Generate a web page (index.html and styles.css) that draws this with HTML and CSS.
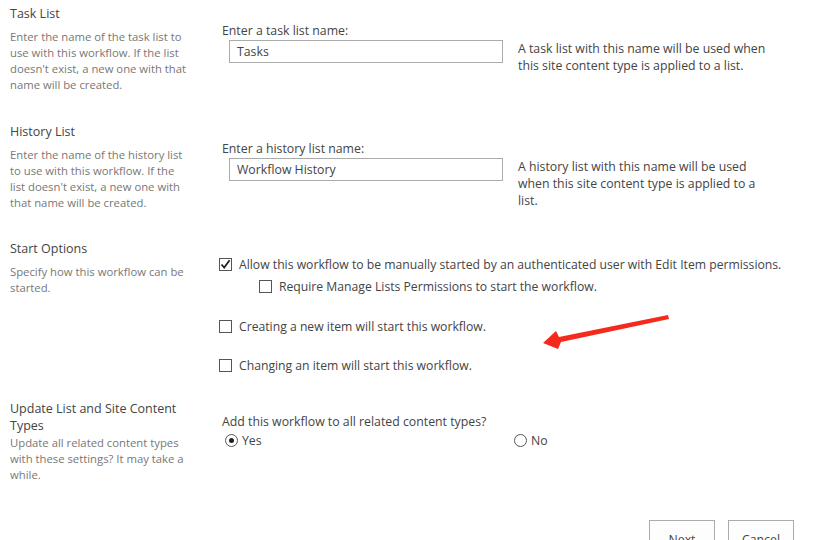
FILE: index.html
```html
<!DOCTYPE html>
<html>
<head>
<meta charset="UTF-8" />
<title>Workflow settings</title>
<link rel="stylesheet" href="styles.css">
</head>
<body>
<div class="page">
	<div class="section sec-task">
		<div class="leftCol">
			<h3>Task List</h3>
			<p class="desc">Enter the name of the task list to use with this workflow. If the list doesn't exist, a new one with that name will be created.</p>
		</div>
		<div class="rightCol">
			<div class="label">Enter a task list name:</div>
			<div class="inputRow">
				<div class="textbox">Tasks</div>
				<div class="note">A task list with this name will be used when this site content type is applied to a list.</div>
			</div>
		</div>
	</div>

	<div class="section sec-history">
		<div class="leftCol">
			<h3>History List</h3>
			<p class="desc">Enter the name of the history list to use with this workflow. If the list doesn't exist, a new one with that name will be created.</p>
		</div>
		<div class="rightCol">
			<div class="label">Enter a history list name:</div>
			<div class="inputRow">
				<div class="textbox">Workflow History</div>
				<div class="note">A history list with this name will be used when this site content type is applied to a list.</div>
			</div>
		</div>
	</div>

	<div class="section sec-start">
		<div class="leftCol">
			<h3>Start Options</h3>
			<p class="desc">Specify how this workflow can be started.</p>
		</div>
		<div class="rightCol options">
			<div class="check first"><span class="box"><svg width="11" height="11" viewBox="0 0 11 11"><path d="M1.5 5.5 L4.2 8.6 L9.6 1.2" fill="none" stroke="#222" stroke-width="1.8"/></svg></span>Allow this workflow to be manually started by an authenticated user with Edit Item permissions.</div>
			<div class="check sub"><span class="box"></span>Require Manage Lists Permissions to start the workflow.</div>
			<div class="check spaced"><span class="box"></span>Creating a new item will start this workflow.</div>
			<div class="check spaced"><span class="box"></span>Changing an item will start this workflow.</div>
		</div>
	</div>

	<div class="section sec-update">
		<div class="leftCol">
			<h3>Update List and Site Content Types</h3>
			<p class="desc">Update all related content types with these settings? It may take a while.</p>
		</div>
		<div class="rightCol">
			<div class="label">Add this workflow to all related content types?</div>
			<div class="radios">
				<div class="radio yes"><span class="dot on"></span>Yes</div>
				<div class="radio"><span class="dot"></span>No</div>
			</div>
		</div>
	</div>

	<div class="buttons">
		<button>Next</button>
		<button>Cancel</button>
	</div>
</div>

<svg class="arrow" width="840" height="540" viewBox="0 0 840 540">
	<polygon points="668,315 669,319 561,342 558,349 543,343 556,331 559,337" fill="#f5291c"/>
</svg>
</body>
</html>
```

FILE: styles.css
```css
html,
body {
	margin: 0;
	padding: 0;
	width: 100%;
	height: 100%;
	overflow: hidden;
	background: #fff;
	font-family: "Open Sans", "Liberation Sans", sans-serif;
	color: #444;
}

.page {
	padding-left: 10px;
}

.section {
	display: flex;
}

.sec-task {
	padding-top: 5px;
	height: 113px;
}

.sec-history {
	padding-top: 5px;
	height: 112px;
}

.sec-start {
	padding-top: 5px;
	height: 155px;
}

.sec-update {
	padding-top: 5px;
	height: 120px;
}

.leftCol {
	width: 180px;
	flex: 0 0 auto;
}

.leftCol h3 {
	margin: 0;
	font-size: 12.5px;
	font-weight: normal;
	line-height: 17px;
	color: #444;
}

.leftCol .desc {
	margin: 7px 0 0 0;
	font-size: 11.3px;
	line-height: 16px;
	color: #777;
}

.sec-update .leftCol .desc {
	margin-top: 1px;
}

.rightCol {
	padding-left: 32px;
	padding-top: 18px;
	font-size: 12.3px;
}

.label {
	line-height: 16px;
	color: #444;
}

.inputRow {
	display: flex;
	margin-top: 1px;
	padding-left: 7px;
}

.textbox {
	width: 258px;
	height: 21px;
	line-height: 22px;
	padding: 0 7px;
	border: 1px solid #ababab;
	color: #444;
}

.note {
	width: 260px;
	margin-left: 15px;
	line-height: 17px;
	color: #444;
}

.options {
	padding-left: 29px;
	padding-top: 14px;
	font-size: 12.2px;
}

.check {
	display: flex;
	align-items: center;
	height: 20px;
	white-space: nowrap;
}

.check .box {
	width: 11px;
	height: 11px;
	border: 1px solid #555;
	margin-right: 7px;
	flex: 0 0 auto;
	display: flex;
}

.check.sub {
	margin-top: 2px;
	padding-left: 40px;
}

.check.spaced {
	margin-top: 20px;
}

.check.spaced:last-child {
	margin-top: 19px;
}

.sec-update .rightCol {
	padding-top: 14px;
}

.radios {
	display: flex;
	padding-left: 3px;
	margin-top: 2px;
}

.radio {
	display: flex;
	align-items: center;
	height: 16px;
}

.radio.yes {
	width: 289px;
}

.dot {
	width: 11px;
	height: 11px;
	border: 1px solid #555;
	border-radius: 50%;
	margin-right: 4px;
	position: relative;
}

.dot.on::after {
	content: "";
	position: absolute;
	left: 3px;
	top: 3px;
	width: 5px;
	height: 5px;
	border-radius: 50%;
	background: #222;
}

.buttons {
	display: flex;
	padding-left: 639px;
	gap: 13px;
}

.buttons button {
	width: 66px;
	height: 30px;
	border: 1px solid #ababab;
	background: #fdfdfd;
	font-family: "Open Sans", "Liberation Sans", sans-serif;
	font-size: 12.3px;
	color: #444;
	padding-top: 10px;
}

.arrow {
	position: absolute;
	left: 0;
	top: 0;
	pointer-events: none;
}
```
